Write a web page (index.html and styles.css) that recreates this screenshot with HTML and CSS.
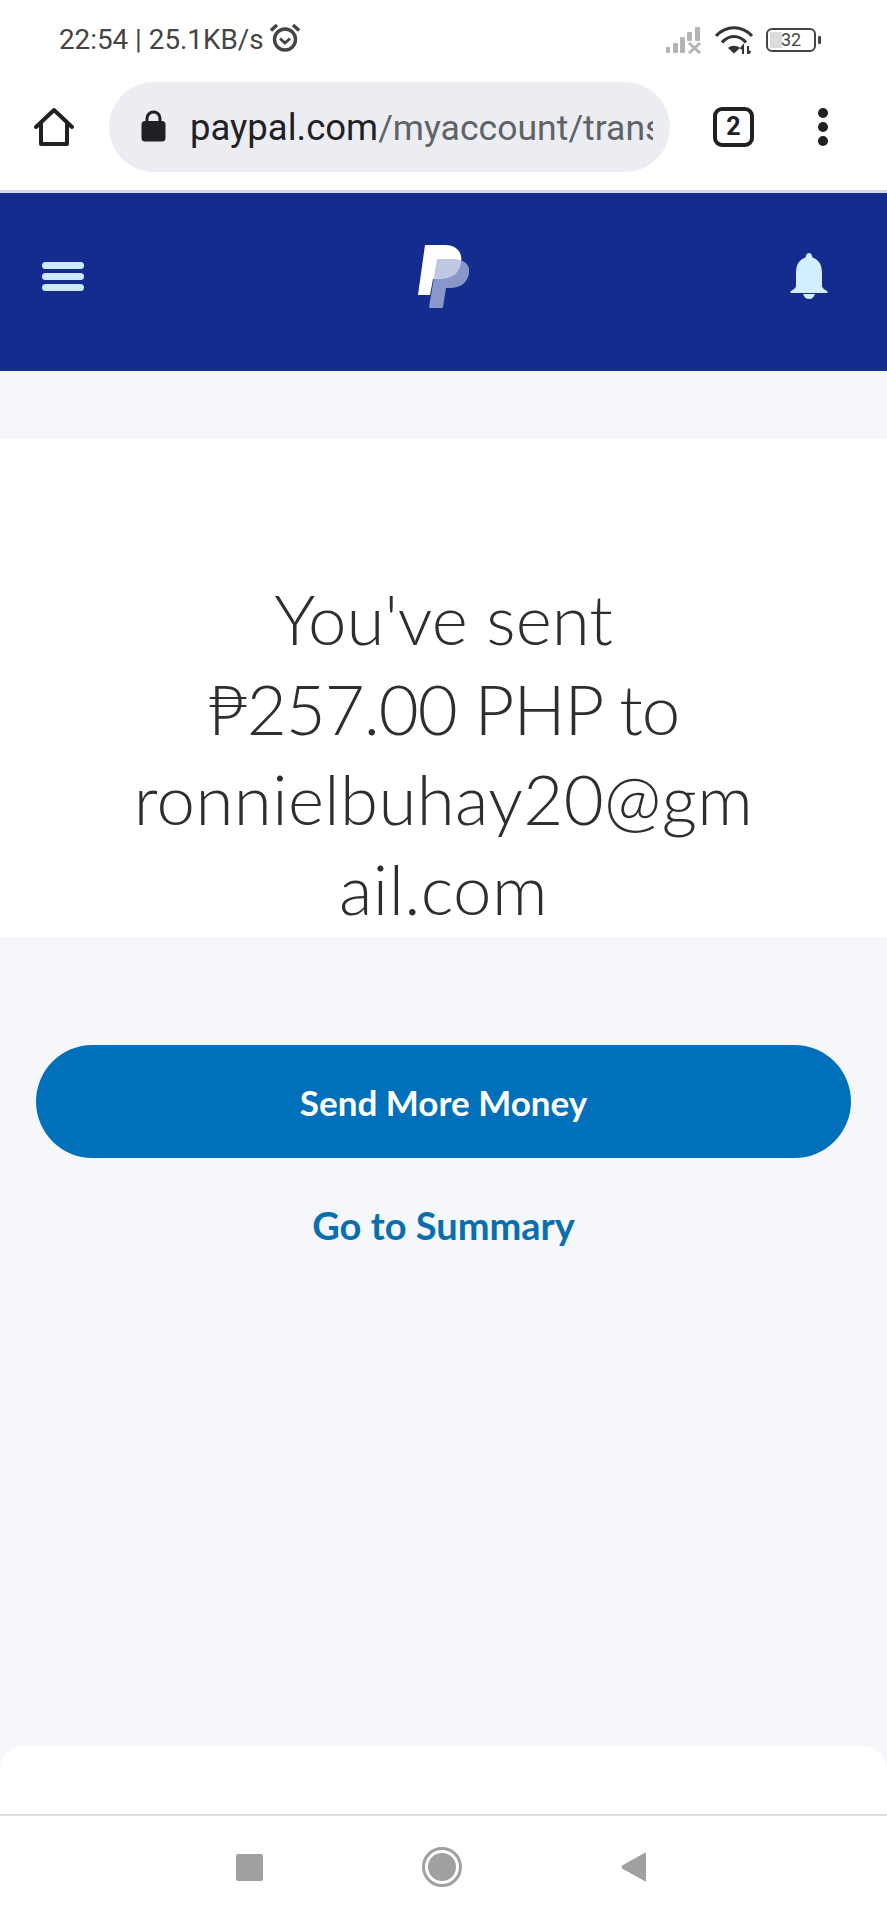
FILE: index.html
```html
<!DOCTYPE html>
<html lang="en">
<head>
<meta charset="utf-8">
<title>PayPal</title>
<link rel="stylesheet" href="styles.css">
</head>
<body>
<div class="phone">
  <div class="statusbar">
    <div class="status-left">
      <span class="status-text">22:54 | 25.1KB/s</span>
      <svg class="alarm" viewBox="0 0 30 30" aria-hidden="true">
        <circle cx="15" cy="16.500" r="10.500" fill="none" stroke="#444" stroke-width="3.400"/>
        <path d="M10 15.500l5 4.500 5-4.500" fill="none" stroke="#444" stroke-width="2.800"/>
        <path d="M1 7.500L7 2M29 7.500L23 2" fill="none" stroke="#444" stroke-width="3.400"/>
      </svg>
    </div>
    <div class="status-right">
      <svg class="signal" viewBox="0 0 38 28" aria-hidden="true">
        <g fill="#b4b4b4">
          <rect x="0" y="21" width="4" height="6" rx="1"/>
          <rect x="7" y="17" width="5" height="10" rx="1"/>
          <rect x="14" y="11" width="5" height="16" rx="1"/>
          <rect x="21" y="6" width="5" height="9" rx="1"/>
          <rect x="29" y="1" width="5" height="14" rx="1"/>
        </g>
        <path d="M23 17l11 10M34 17L23 27" stroke="#b4b4b4" stroke-width="3" fill="none"/>
      </svg>
      <svg class="wifi" viewBox="0 0 38 28" aria-hidden="true">
        <g fill="none" stroke="#333" stroke-width="3.200">
          <path d="M1 10C11 -1 27 -1 37 10"/>
          <path d="M7 16.500C14 8.500 24 8.500 31 16.500"/>
        </g>
        <path d="M19 27.500l-6-5.500c3-3 9-3 12 0z" fill="#333"/>
        <path d="M28 28v-8l-2.500 3M33 20v8l2.500-3" fill="none" stroke="#333" stroke-width="2"/>
      </svg>
      <div class="battery">
        <div class="battery-body"><span class="battery-fill"></span><span class="battery-num">32</span></div>
        <span class="battery-nub"></span>
      </div>
    </div>
  </div>

  <div class="toolbar">
    <svg class="home" viewBox="0 0 40 40" aria-hidden="true">
      <path d="M2 20L20 3l18 17M7 16v21h26V16" fill="none" stroke="#202124" stroke-width="4" stroke-linejoin="round" stroke-linecap="round"/>
    </svg>
    <div class="urlbar">
      <svg class="lock" viewBox="0 0 25 32" aria-hidden="true">
        <path d="M6 13V8.500a6.500 6.500 0 0 1 13 0V13" fill="none" stroke="#202124" stroke-width="3"/>
        <rect x="0.500" y="11" width="24" height="20.500" rx="3.500" fill="#202124"/>
      </svg>
      <div class="url"><span class="url-host">paypal.com</span>/myaccount/transfer</div>
    </div>
    <div class="tabs">2</div>
    <div class="dots"><span></span><span></span><span></span></div>
  </div>

  <header class="brandbar">
    <div class="burger"><span></span><span></span><span></span></div>
    <svg class="logo" viewBox="0 0 51 63" aria-hidden="true">
      <path d="M7 0H27C39 0 45 8 43 18C41 29 33 34 22 34H15L12 50H0Z" fill="#fff"/>
      <path d="M19 14H35C46 14 53 20 51 29C49 38 42 43 32 43H28L25 62Q25 63 24 63H12Q11 63 11 62Z" fill="#adb7dc" fill-opacity=".77"/>
    </svg>
    <svg class="bell" viewBox="0 0 38 46" aria-hidden="true">
      <path d="M19 0c2 0 3 2 3.500 4.500C29 6.500 32 12 32 20v13c0 2 2 3 5 5 1 1 1 2-1 2H2c-2 0-2-1-1-2 3-2 5-3 5-5V20c0-8 3-13.500 9.500-15.500C16 2 17 0 19 0z" fill="#d2eeff"/>
      <path d="M13 41h12c-1 3-3 5-6 5s-5-2-6-5z" fill="#d2eeff"/>
    </svg>
  </header>

  <main class="content">
    <section class="hero">
      <h1 class="headline">
        <span class="line">You've sent</span>
        <span class="line line-amount">₱257.00 PHP to</span>
        <span class="line line-email">ronnielbuhay20@gmail.com</span>
      </h1>
    </section>
    <div class="actions">
      <a class="btn-primary" href="#">Send More Money</a>
      <a class="btn-link" href="#">Go to Summary</a>
    </div>
  </main>

  <div class="sheet"></div>

  <nav class="navbar">
    <span class="nav-square"></span>
    <svg class="nav-circle" viewBox="0 0 40 40" aria-hidden="true">
      <circle cx="20" cy="20" r="18.500" fill="none" stroke="#a0a0a0" stroke-width="3"/>
      <circle cx="20" cy="20" r="14" fill="#a0a0a0"/>
    </svg>
    <svg class="nav-back" viewBox="0 0 26 30" aria-hidden="true">
      <path d="M25 1.500V28.500Q25 30 23.500 29L1 16.500Q0 15 1 13.500L23.500 1Q25 0 25 1.500Z" fill="#a0a0a0"/>
    </svg>
  </nav>
</div>
</body>
</html>
```
FILE: styles.css
```css
* { box-sizing: border-box; }
html, body { margin: 0; padding: 0; }
body { background: #fff; }

.phone {
  width: 887px;
  height: 1920px;
  display: flex;
  flex-direction: column;
  overflow: hidden;
  background: #f5f7fa;
  font-family: Roboto, "Liberation Sans", sans-serif;
}

/* Status bar */
.statusbar {
  height: 78px;
  flex: none;
  background: #fff;
  display: flex;
  justify-content: space-between;
  padding: 25px 66px 0 59px;
  align-items: flex-start;
}
.status-left { display: flex; align-items: center; gap: 6px; height: 30px; }
.status-text { font-size: 27.800px; color: #444; line-height: 30px; white-space: nowrap; }
.alarm { width: 30px; height: 30px; margin-top: -4px; }
.status-right { display: flex; align-items: center; height: 30px; }
.signal { width: 38px; height: 28px; }
.wifi { width: 38px; height: 28px; margin-left: 11px; }
.battery { display: flex; align-items: center; margin-left: 13px; }
.battery-body {
  position: relative;
  width: 50px;
  height: 24px;
  border: 2.500px solid #444;
  border-radius: 6px;
  display: flex;
  align-items: center;
  justify-content: center;
}
.battery-fill { position: absolute; left: 2px; top: 2px; bottom: 2px; width: 12px; background: #dcdcdc; }
.battery-num { position: relative; font-size: 18px; line-height: 1; color: #444; }
.battery-nub { width: 3px; height: 8px; background: #444; margin-left: 2px; border-radius: 1px; }

/* Browser toolbar */
.toolbar {
  height: 115px;
  flex: none;
  background: #fff;
  display: flex;
  align-items: flex-start;
  padding: 4px 0 0 34px;
  border-bottom: 3px solid #d8d9e6;
}
.home { width: 40px; height: 40px; margin-top: 25px; flex: none; }
.urlbar {
  width: 561px;
  height: 90px;
  margin-left: 35px;
  flex: none;
  border-radius: 45px;
  background: #ecedf3;
  display: flex;
  align-items: center;
  padding: 0 17px 0 32px;
}
.lock { width: 25px; height: 32px; flex: none; margin-top: -2px; }
.url {
  margin-left: 24px;
  font-size: 35.600px;
  color: #5f6368;
  white-space: nowrap;
  overflow: hidden;
  flex: 1;
  min-width: 0;
}
.url-host { color: #202124; font-size: 36.500px; }
.tabs {
  width: 41px;
  height: 40px;
  margin: 25px 0 0 43px;
  flex: none;
  border: 4px solid #202124;
  border-radius: 9px;
  color: #202124;
  font-size: 25px;
  font-weight: 700;
  line-height: 32px;
  text-align: center;
}
.dots {
  margin: 26px 0 0 64px;
  display: flex;
  flex-direction: column;
  gap: 4px;
}
.dots span { width: 10px; height: 10px; border-radius: 50%; background: #202124; }

/* PayPal header */
.brandbar {
  height: 178px;
  flex: none;
  background: #142c8e;
  display: grid;
  grid-template-columns: 1fr auto 1fr;
  align-items: center;
  padding: 0 42px;
}
.burger { display: flex; flex-direction: column; gap: 4px; margin-top: -11px; justify-self: start; }
.burger span { width: 42px; height: 7px; border-radius: 4px; background: #cfeaff; }
.logo { width: 51px; height: 63px; margin-top: -11px; }
.bell { width: 38px; height: 46px; margin: -13px 17px 0 0; justify-self: end; }

/* Main */
.content { flex: 1; min-height: 0; display: flex; flex-direction: column; padding-top: 68px; }
.hero { background: #fff; padding: 135px 0 0; height: 498px; flex: none; }
.headline {
  margin: 0 auto;
  width: 625px;
  font-family: Lato, "Open Sans", sans-serif;
  font-weight: 300;
  font-size: 69px;
  line-height: 90px;
  color: #2c2e2f;
  text-align: center;
  overflow-wrap: anywhere;
}
.line { display: block; }
.line-amount { letter-spacing: -1px; }
.line-email { letter-spacing: 0.400px; }

.actions { display: flex; flex-direction: column; align-items: center; padding: 108px 36px 0; }
.btn-primary {
  width: 100%;
  height: 113px;
  border-radius: 57px;
  background: #0070ba;
  color: #fff;
  font-family: Lato, "Open Sans", sans-serif;
  font-weight: 700;
  font-size: 35px;
  display: flex;
  align-items: center;
  justify-content: center;
  text-decoration: none;
}
.btn-link {
  margin-top: 44px;
  color: #086fae;
  font-family: Lato, "Open Sans", sans-serif;
  font-weight: 700;
  font-size: 38px;
  line-height: 46px;
  text-decoration: none;
}

/* Bottom sheet and nav */
.sheet {
  height: 68px;
  flex: none;
  background: #fff;
  border-radius: 24px 24px 0 0;
}
.navbar {
  height: 106px;
  flex: none;
  background: #fff;
  border-top: 2px solid #dcdcdc;
  display: flex;
  align-items: center;
  padding: 0 240px 2px 236px;
  justify-content: space-between;
}
.nav-square { width: 27px; height: 27px; background: #a0a0a0; border-radius: 2px; }
.nav-circle { width: 40px; height: 40px; }
.nav-back { width: 26px; height: 30px; }
```
